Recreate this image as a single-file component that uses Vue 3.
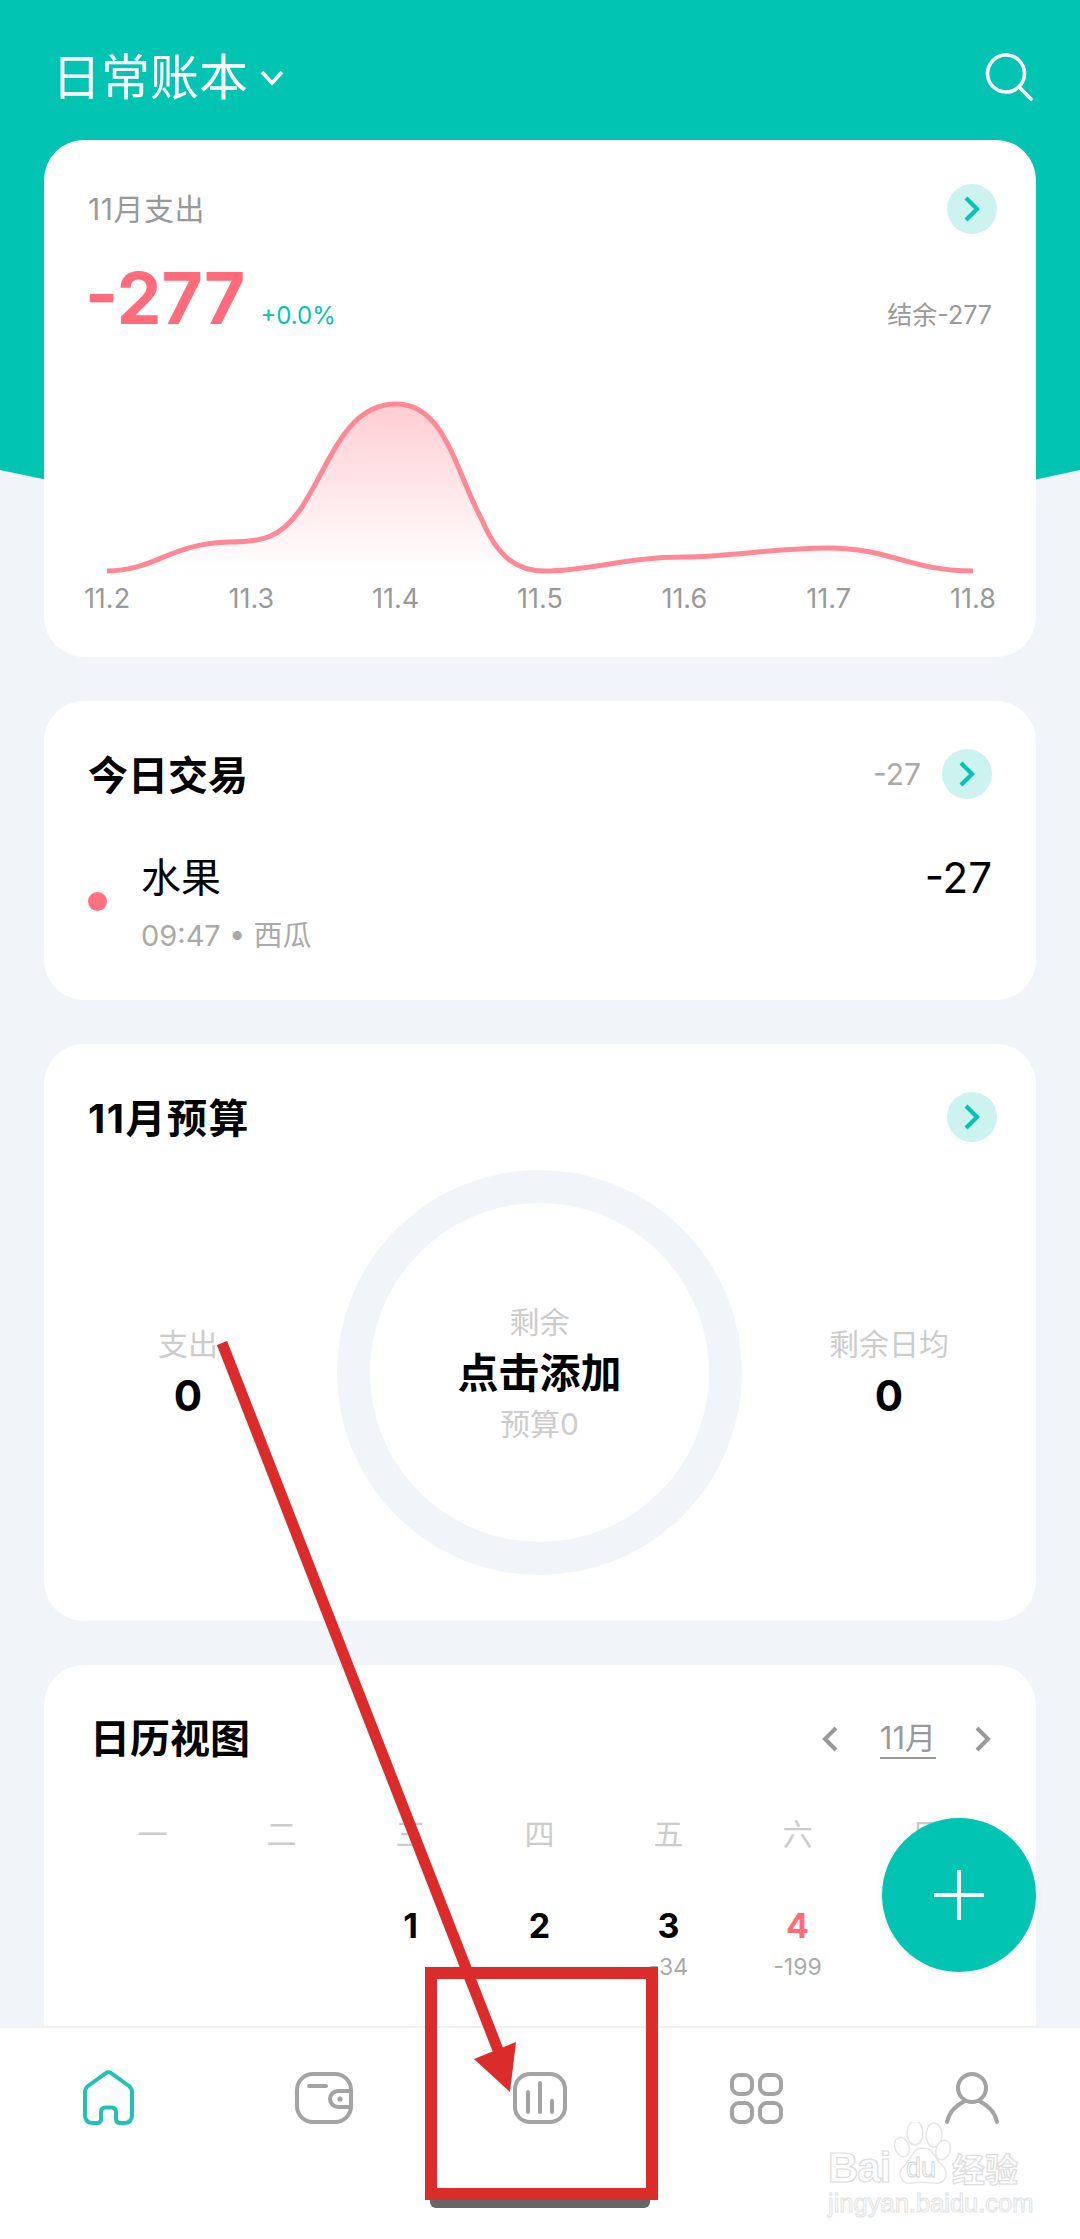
<script setup>
const labels = ['11.2', '11.3', '11.4', '11.5', '11.6', '11.7', '11.8']
const weekdays = ['一', '二', '三', '四', '五', '六', '日']
const days = [
  { n: '', s: '' }, { n: '', s: '' },
  { n: '1', s: '' }, { n: '2', s: '' },
  { n: '3', s: '-34' }, { n: '4', s: '-199', red: true }
]
const curve = 'M107 571 C155 571 170 543 230 542 C262 542 280 538 300 510 C330 465 345 404 396 404 C445 404 455 470 482 520 C497 555 515 571 545 571 C590 571 625 557 684 557 C730 557 775 548 828 548 C890 548 910 571 973 571'
</script>

<template>
  <div class="page">
    <svg class="hero" viewBox="0 0 1080 560" width="1080" height="560">
      <path d="M0 0H1080V470Q540 590 0 470Z" fill="#02C4B3" />
    </svg>

    <header class="top">
      <div class="book">
        <span>日常账本</span>
        <svg width="26" height="18" viewBox="0 0 26 18"><path d="M3 3l10 11L23 3" fill="none" stroke="#fff" stroke-width="3.6" /></svg>
      </div>
      <svg class="search" width="52" height="52" viewBox="0 0 52 52">
        <circle cx="24" cy="20.5" r="18.5" fill="none" stroke="#fff" stroke-width="3.6" />
        <path d="M37 34l12 12" stroke="#fff" stroke-width="3.6" stroke-linecap="round" />
      </svg>
    </header>

    <main class="cards">
      <section class="card c1">
        <div class="row">
          <span class="sub-title">11月支出</span>
          <span class="go shift"><svg width="20" height="28" viewBox="0 0 20 28"><path d="M4 3l11 11-11 11" /></svg></span>
        </div>
        <div class="amount">
          <span class="big">-277</span>
          <span class="pct">+0.0%</span>
          <span class="rest">结余-277</span>
        </div>
        <svg class="chart" viewBox="44 395 992 225" width="992" height="225">
          <defs>
            <linearGradient id="fade" x1="0" y1="404" x2="0" y2="571" gradientUnits="userSpaceOnUse">
              <stop offset="0" stop-color="#FF8896" stop-opacity=".42" />
              <stop offset="1" stop-color="#FF8896" stop-opacity="0" />
            </linearGradient>
          </defs>
          <path :d="curve + ' Z'" fill="url(#fade)" />
          <path :d="curve" fill="none" stroke="#FF8896" stroke-width="5" />
          <text v-for="(l, i) in labels" :key="l" :x="107 + i * 144.33" y="608" text-anchor="middle" class="axis">{{ l }}</text>
        </svg>
      </section>

      <section class="card c2">
        <div class="row">
          <h2>今日交易</h2>
          <div class="side">
            <span class="side-num">-27</span>
            <span class="go"><svg width="20" height="28" viewBox="0 0 20 28"><path d="M4 3l11 11-11 11" /></svg></span>
          </div>
        </div>
        <div class="tx">
          <i class="dot"></i>
          <div class="tx-main">
            <div class="tx-name">水果</div>
            <div class="tx-meta">09:47 • 西瓜</div>
          </div>
          <div class="tx-val">-27</div>
        </div>
      </section>

      <section class="card c3">
        <div class="row">
          <h2 class="budget-title">11月预算</h2>
          <span class="go shift"><svg width="20" height="28" viewBox="0 0 20 28"><path d="M4 3l11 11-11 11" /></svg></span>
        </div>
        <div class="budget">
          <div class="stat left">
            <span class="stat-label">支出</span>
            <b class="stat-val">0</b>
          </div>
          <div class="ring">
            <span class="ring-label">剩余</span>
            <b class="ring-main">点击添加</b>
            <span class="ring-label">预算0</span>
          </div>
          <div class="stat">
            <span class="stat-label">剩余日均</span>
            <b class="stat-val">0</b>
          </div>
        </div>
      </section>

      <section class="card c4">
        <div class="row">
          <h2 class="cal-title">日历视图</h2>
          <div class="month">
            <svg width="18" height="26" viewBox="0 0 18 26"><path d="M15 2L4 13l11 11" /></svg>
            <span class="month-text">11月</span>
            <svg width="18" height="26" viewBox="0 0 18 26"><path d="M3 2l11 11-11 11" /></svg>
          </div>
        </div>
        <div class="week">
          <span v-for="w in weekdays" :key="w">{{ w }}</span>
        </div>
        <div class="days">
          <div v-for="(d, i) in days" :key="i" class="day">
            <b :class="{ red: d.red }">{{ d.n }}</b>
            <small>{{ d.s }}</small>
          </div>
        </div>
      </section>
    </main>

    <button class="fab" type="button">
      <svg width="54" height="54" viewBox="0 0 54 54"><path d="M27 2v50M2 27h50" stroke="#fff" stroke-width="4" /></svg>
    </button>

    <nav class="nav">
      <div class="tab">
        <svg width="60" height="60" viewBox="0 0 60 60" class="teal">
          <path d="M27.5 5.3Q30.5 3.2 33.5 5.3L51 18Q54 20.5 54 24V47Q54 55 46 55H42Q38 55 38 51V44Q38 39.5 33.5 39.5H27.5Q23 39.5 23 44V51Q23 55 19 55H15Q7 55 7 47V24Q7 20.5 10 18Z" />
        </svg>
      </div>
      <div class="tab">
        <svg width="60" height="60" viewBox="0 0 60 60">
          <rect x="3" y="6" width="54" height="48" rx="16" />
          <path d="M15 18H32M57 23H44A8 8 0 0 0 44 39H57" />
          <circle cx="46" cy="31" r="2.6" class="solid" />
        </svg>
      </div>
      <div class="tab">
        <svg width="60" height="60" viewBox="0 0 60 60">
          <rect x="5" y="6" width="50" height="48" rx="15" />
          <path d="M18 24V44M30 15V44M42 33V44" />
        </svg>
      </div>
      <div class="tab">
        <svg width="60" height="60" viewBox="0 0 60 60">
          <rect x="6" y="7" width="20" height="19" rx="7" />
          <rect x="34" y="7" width="21" height="19" rx="7" />
          <rect x="6" y="35" width="20" height="19" rx="7" />
          <rect x="34" y="35" width="21" height="19" rx="7" />
        </svg>
      </div>
      <div class="tab">
        <svg width="60" height="60" viewBox="0 0 60 60">
          <circle cx="30" cy="20" r="14" />
          <path d="M5 54Q8 40 23 33M55 54Q52 40 37 33" />
        </svg>
      </div>
      <i class="indicator"></i>
    </nav>

    <div class="watermark">
      <svg class="paw" width="60" height="66" viewBox="0 0 60 66">
        <ellipse cx="8" cy="25" rx="7" ry="10" transform="rotate(-20 8 25)" />
        <ellipse cx="21" cy="11" rx="8" ry="12" />
        <ellipse cx="40" cy="13" rx="8" ry="12" />
        <ellipse cx="49" cy="28" rx="7" ry="10" transform="rotate(20 49 28)" />
        <path d="M29 26C40 26 40 36 48 43C57 52 50 63 40 61C33 60 25 60 18 61C8 63 2 52 10 44C18 37 18 26 29 26Z" />
      </svg>
      <div class="wm-main"><span class="wm-bai">Bai</span><span class="wm-du">du</span><span class="wm-cn">经验</span></div>
      <div class="wm-url">jingyan.baidu.com</div>
    </div>

    <svg class="marks" viewBox="0 0 1080 2239" width="1080" height="2239">
      <path d="M222 1343L498 2050" stroke="#DC2B2B" stroke-width="11" />
      <path d="M516 2042L474 2059L510 2092Z" fill="#DC2B2B" />
      <rect x="431" y="1973" width="221" height="221" fill="none" stroke="#DC2B2B" stroke-width="12" />
    </svg>
  </div>
</template>

<style>
html, body { margin: 0; padding: 0; background: #F1F5FA; }
</style>

<style scoped>
.page {
  position: relative;
  width: 1080px;
  height: 2239px;
  overflow: hidden;
  background: #F1F5FA;
  font-family: Inter, "Noto Sans CJK SC", sans-serif;
}
.hero { position: absolute; left: 0; top: 0; display: block; }
.top {
  position: relative;
  height: 140px;
  padding: 50px 46px 0 52px;
  box-sizing: border-box;
  display: flex;
  justify-content: space-between;
  align-items: flex-start;
}
.book {
  display: flex;
  align-items: center;
  gap: 11px;
  color: #fff;
  font-size: 49px;
  line-height: 56px;
}
.search { display: block; margin-top: 3px; }
.cards {
  position: relative;
  display: flex;
  flex-direction: column;
  gap: 44px;
  padding: 0 44px;
}
.card {
  background: #fff;
  border-radius: 40px;
  padding: 48px 44px 0;
  box-sizing: border-box;
}
.c1 { height: 517px; padding-top: 44px; }
.c2 { height: 299px; }
.c3 { height: 577px; }
.c4 { height: 520px; padding-top: 49px; }
.row {
  display: flex;
  justify-content: space-between;
  align-items: center;
  height: 50px;
}
h2 {
  margin: 0;
  padding-top: 4px;
  font-size: 40px;
  font-weight: 700;
  line-height: 50px;
  color: #000;
}
.budget-title { letter-spacing: 1.5px; }
.cal-title { margin-left: 2px; padding-top: 0; }
.sub-title { font-size: 30px; letter-spacing: .5px; color: #999; margin-top: -4px; }
.go {
  width: 50px;
  height: 50px;
  border-radius: 50%;
  background: #CCF3EF;
  display: flex;
  align-items: center;
  justify-content: center;
}
.go svg { display: block; }
.go path { fill: none; stroke: #02C4B3; stroke-width: 4.2; }
.shift { margin-right: -5px; }
.amount {
  display: flex;
  align-items: baseline;
  height: 74px;
  margin-top: 27px;
}
.big {
  font-size: 71px;
  font-weight: 700;
  line-height: 74px;
  color: #FF6B7A;
  margin-left: -3px;
}
.pct { margin-left: 15px; font-size: 24px; color: #02C4B3; }
.rest { margin-left: auto; font-size: 25px; color: #999; }
.chart { display: block; margin: 60px 0 0 -44px; }
.axis { font-size: 27px; fill: #999; }
.side { display: flex; align-items: center; gap: 21px; }
.side-num { font-size: 30px; color: #aaa; }
.tx {
  display: flex;
  align-items: center;
  margin-top: 51px;
}
.dot {
  width: 19px;
  height: 19px;
  border-radius: 50%;
  background: #FF7080;
  margin: -4px 34px 0 0;
}
.tx-main { flex: 1; }
.tx-name { font-size: 40px; line-height: 56px; color: #000; }
.tx-meta { margin-top: 9px; font-size: 29px; line-height: 42px; color: #aaa; }
.tx-val {
  align-self: flex-start;
  font-size: 42px;
  line-height: 56px;
  color: #000;
}
.budget {
  display: grid;
  grid-template-columns: 293px 405px 294px;
  align-items: center;
  margin: 28px -44px 0;
}
.stat {
  display: flex;
  flex-direction: column;
  align-items: center;
  margin-bottom: 2px;
}
.stat.left { padding-right: 5px; }
.stat-label { font-size: 30px; line-height: 44px; color: #ccc; }
.stat-val { margin-top: 5px; font-size: 42px; line-height: 50px; color: #000; }
.ring {
  width: 405px;
  height: 405px;
  box-sizing: border-box;
  border: 33px solid #F1F5FA;
  border-radius: 50%;
  display: flex;
  flex-direction: column;
  align-items: center;
  justify-content: center;
  padding-top: 2px;
}
.ring-label { font-size: 30px; line-height: 51px; color: #ccc; }
.ring-main { font-size: 41px; line-height: 51px; color: #000; }
.month {
  display: flex;
  align-items: center;
  color: #999;
}
.month svg { display: block; }
.month path { fill: none; stroke: #999; stroke-width: 4; }
.month-text {
  margin: 0 38px 0 41px;
  font-size: 31px;
  line-height: 38px;
  border-bottom: 2px solid #999;
}
.week, .days {
  display: grid;
  grid-template-columns: repeat(7, 129px);
  justify-items: center;
}
.week {
  margin-top: 50px;
  font-size: 30px;
  line-height: 40px;
  color: #ccc;
}
.days { margin-top: 50px; }
.day {
  display: flex;
  flex-direction: column;
  align-items: center;
}
.day b { font-size: 34px; line-height: 44px; color: #000; height: 44px; }
.day b.red { color: #FF6B7A; }
.day small { font-size: 23px; line-height: 38px; color: #aaa; }
.fab {
  position: absolute;
  left: 882px;
  top: 1818px;
  width: 154px;
  height: 154px;
  border: 0;
  border-radius: 50%;
  padding: 0;
  background: #02C4B3;
  box-shadow: 0 2px 10px rgba(0, 0, 0, .06);
  display: flex;
  align-items: center;
  justify-content: center;
}
.fab svg { display: block; }
.nav {
  position: absolute;
  left: 0;
  top: 2026px;
  width: 1080px;
  height: 213px;
  box-sizing: border-box;
  padding-top: 40px;
  background: #fff;
  border-top: 2px solid #EEF0F3;
  display: grid;
  grid-template-columns: repeat(5, 216px);
  align-items: start;
}
.tab { display: flex; justify-content: center; }
.tab svg { display: block; }
.tab rect, .tab path, .tab circle {
  fill: none;
  stroke: #A3A3A3;
  stroke-width: 4;
  stroke-linecap: round;
  stroke-linejoin: round;
}
.tab .solid { fill: #A3A3A3; stroke: none; }
.tab .teal path { stroke: #1FC2B4; }
.indicator {
  position: absolute;
  left: 430px;
  top: 170px;
  width: 220px;
  height: 10px;
  border-radius: 0 0 6px 6px;
  background: #666;
}
.watermark {
  position: absolute;
  left: 828px;
  top: 2122px;
  width: 200px;
  height: 96px;
}
.paw { position: absolute; left: 66px; top: 0; display: block; }
.paw ellipse, .paw path { fill: #fff; stroke: #E6E6E6; stroke-width: 1.5; }
.wm-main {
  position: absolute;
  left: 0;
  top: 24px;
  display: flex;
  align-items: center;
  height: 44px;
  color: #fff;
  -webkit-text-stroke: 1.2px #DCDCDC;
  font-family: "Liberation Sans", "Noto Sans CJK SC", sans-serif;
  font-weight: 700;
}
.wm-bai { font-size: 42px; width: 78px; letter-spacing: -1px; }
.wm-du { font-size: 27px; width: 46px; font-weight: 400; -webkit-text-stroke: .8px #CFCFCF; color: #fff; }
.wm-cn { font-size: 33px; }
.wm-url {
  position: absolute;
  left: 0;
  top: 66px;
  color: #fff;
  -webkit-text-stroke: 1px #E2E2E2;
  font-family: "Liberation Sans", sans-serif;
  font-size: 25.5px;
  line-height: 30px;
  white-space: nowrap;
}
.marks { position: absolute; left: 0; top: 0; display: block; pointer-events: none; }
</style>
